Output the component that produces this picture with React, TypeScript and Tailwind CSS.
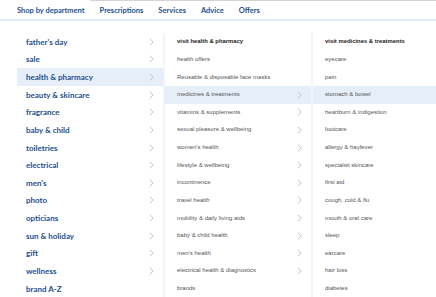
import React from "react";

const col1 = [
  "father's day",
  "sale",
  "health & pharmacy",
  "beauty & skincare",
  "fragrance",
  "baby & child",
  "toiletries",
  "electrical",
  "men's",
  "photo",
  "opticians",
  "sun & holiday",
  "gift",
  "wellness",
  "brand A-Z",
];

const col2: [string, boolean][] = [
  ["visit health & pharmacy", false],
  ["health offers", false],
  ["Reusable & disposable face masks", false],
  ["medicines & treatments", true],
  ["vitamins & supplements", true],
  ["sexual pleasure & wellbeing", true],
  ["women's health", true],
  ["lifestyle & wellbeing", true],
  ["incontinence", true],
  ["travel health", true],
  ["mobility & daily living aids", true],
  ["baby & child health", true],
  ["men's health", true],
  ["electrical health & diagnostics", true],
  ["brands", false],
];

const col3 = [
  "visit medicines & treatments",
  "eyecare",
  "pain",
  "stomach & bowel",
  "heartburn & indigestion",
  "footcare",
  "allergy & hayfever",
  "specialist skincare",
  "first aid",
  "cough, cold & flu",
  "mouth & oral care",
  "sleep",
  "earcare",
  "hair loss",
  "diabetes",
];

function Chevron() {
  return (
    <svg width="5" height="8" viewBox="0 0 5 8" fill="none">
      <path d="M0.8 0.7 L4.2 4 L0.8 7.3" stroke="#b9bec6" strokeWidth="0.9" />
    </svg>
  );
}

export default function App() {
  return (
    <div className="w-[436px] h-[297px] overflow-hidden bg-white relative">
      <div className="ml-[90px] h-px bg-[#d4d4d4]" />
      <nav
        className="flex items-center h-[20px] pl-[17px] gap-[15px] text-[7.5px] font-bold text-[#23508f] border-b-2 border-[#e1ecf9] pt-px"
        style={{ fontFamily: "Lato, 'Noto Sans', sans-serif" }}
      >
        <span>Shop by department</span>
        <span>Prescriptions</span>
        <span>Services</span>
        <span>Advice</span>
        <span>Offers</span>
      </nav>
      <div className="flex pl-[17px] pt-[12px]">
        <div
          className="w-[146px] flex flex-col"
          style={{ fontFamily: "Lato, 'Noto Sans', sans-serif" }}
        >
          {col1.map((t, i) => (
            <div
              key={t}
              className={`h-[17.64px] flex items-center justify-between pl-[9px] pr-[9px] text-[8px] font-bold text-[#23508f] ${
                i === 2 ? "bg-[#e6eef9]" : ""
              }`}
            >
              <span>{t}</span>
              {i < 14 && <Chevron />}
            </div>
          ))}
        </div>
        <div className="w-[2px] bg-[#f1f5fb]" />
        <div
          className="w-[146px] flex flex-col"
          style={{ fontFamily: "'Liberation Sans', Arial, sans-serif" }}
        >
          {col2.map(([t, ch], i) => (
            <div
              key={t}
              className={`h-[17.64px] flex items-center justify-between pl-[12px] pr-[9px] ${
                i === 0
                  ? "text-[5.9px] font-bold text-[#222]"
                  : "text-[6px] text-[#555]"
              } ${i === 3 ? "bg-[#e6eef9]" : ""}`}
            >
              <span>{t}</span>
              {ch && <Chevron />}
            </div>
          ))}
        </div>
        <div className="w-[2px] bg-[#f1f5fb]" />
        <div
          className="flex-1 flex flex-col"
          style={{ fontFamily: "'Liberation Sans', Arial, sans-serif" }}
        >
          {col3.map((t, i) => (
            <div
              key={t}
              className={`h-[17.64px] flex items-center pl-[12px] ${
                i === 0
                  ? "text-[5.9px] font-bold text-[#222]"
                  : "text-[6px] text-[#555]"
              } ${i === 3 ? "bg-[#e6eef9]" : ""}`}
            >
              <span>{t}</span>
            </div>
          ))}
        </div>
      </div>
    </div>
  );
}
